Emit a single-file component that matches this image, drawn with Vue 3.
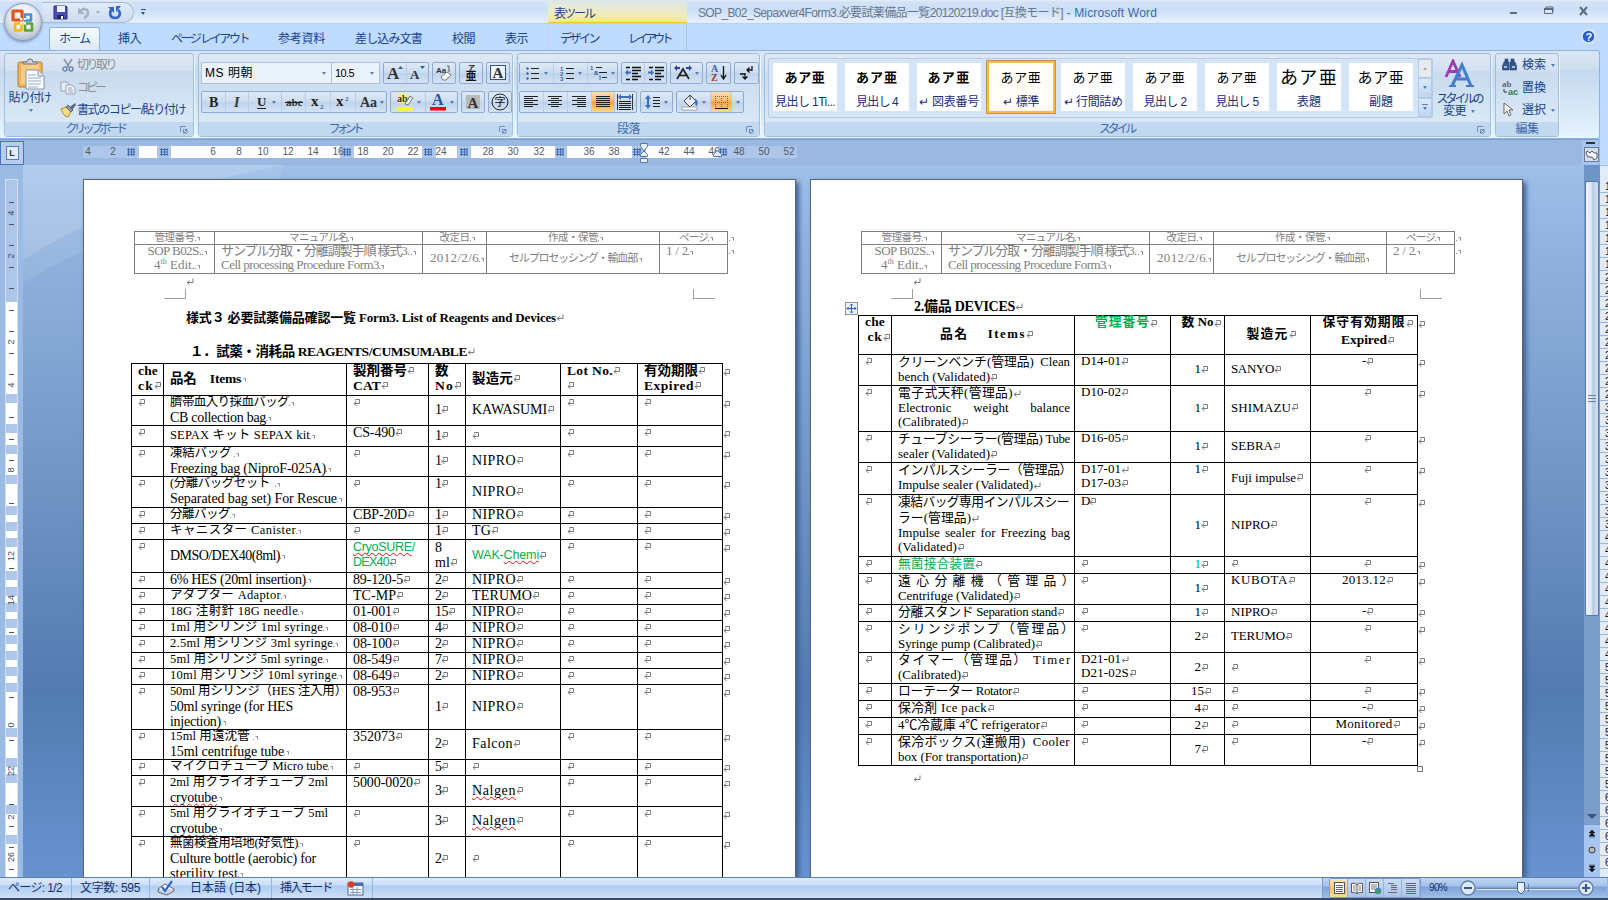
<script setup>
import { h } from 'vue'

// Spreads a label's letters (or only its words) so that it fills a given width.
const vFit = {
  mounted(el, { value }) {
    if (!value) return
    const byWord = Array.isArray(value)
    const target = byWord ? value[0] : value
    const diff = target - el.getBoundingClientRect().width
    const text = el.textContent
    if (byWord) el.style.wordSpacing = diff / (text.split(' ').length - 1) + 'px'
    else el.style.letterSpacing = diff / [...text].length + 'px'
  },
}

const S = (c, t) => `<text fill="${c}" ${t}`
const serif = 'font-family="Liberation Serif" font-weight="bold"'
const lines = (ys, w, x = 0) => ys.map((y, i) => `<rect x="${x + (w[i] ? w[i][0] : 0)}" y="${y}" width="${w[i] ? w[i][1] : 14}" height="1" fill="#222"/>`).join('')

const icons = {
  save: [15, 15, '<path d="M1 1h12l1 1v12H1z" fill="#4a4fb5" stroke="#2c318c"/><rect x="4" y="1" width="8" height="6" fill="#eef3fb"/><rect x="4" y="10" width="7" height="4" fill="#222a55"/><rect x="8" y="11" width="2" height="3" fill="#fff"/>'],
  undo: [15, 14, '<path d="M2 1v7h7z" fill="#a9b4c8"/><path d="M4 6C7 1.500 12 2 12 7c0 3-2 4-4 5" fill="none" stroke="#a9b4c8" stroke-width="2.600"/>'],
  redo: [14, 14, '<path d="M4 3C1 6 1.500 12 7 12s6-6 3-8" fill="none" stroke="#2f66c8" stroke-width="2.600"/><path d="M0 1h6v6zM8 6V0h5z" fill="#2f66c8"/>'],
  paste: [28, 32, '<rect x="1" y="4" width="24" height="25" rx="1.500" fill="#f0b552" stroke="#b97a24"/><rect x="4" y="6" width="18" height="20" fill="#f6cd83"/><path d="M6 6V4h4q0-3 3-3t3 3h4v2z" fill="#cfd3d8" stroke="#70757c"/><path d="M9 12h12l6 6v13H9z" fill="#fff" stroke="#7f93b4"/><path d="M21 12v6h6" fill="#dfe8f5" stroke="#7f93b4"/><path d="M11 17h8M11 20h13M11 23h13M11 26h13M11 29h10" stroke="#8aa7d0"/>'],
  cut: [12, 14, '<path d="M2 1l5 8M10 1L5 9" stroke="#8e99aa" stroke-width="1.700"/><circle cx="3" cy="11" r="2" fill="none" stroke="#6d86ad" stroke-width="1.400"/><circle cx="9" cy="11" r="2" fill="none" stroke="#6d86ad" stroke-width="1.400"/>'],
  copy: [16, 14, '<path d="M1 1h6l2 2v7H1z" fill="#e9eef6" stroke="#94a2b8"/><path d="M6 4h6l3 3v6H6z" fill="#f3f6fb" stroke="#94a2b8"/><path d="M8 7h4M8 9h5M8 11h5" stroke="#94a2b8"/>'],
  brush: [17, 15, '<path d="M1 6l5-2 5 5-3 5q-4 0-7-8z" fill="#f5dc86" stroke="#b58b26"/><path d="M6 4l2-2 5 5-2 2z" fill="#8f9dbb" stroke="#56627e"/><path d="M10 4l5-4 1 2-4 5z" fill="#5c6380"/>'],
  launch: [8, 8, '<path d="M.5 6V.5H6" fill="none" stroke="#6b8fc0"/><path d="M3 3h4.500v4.500H3z" fill="#6b8fc0"/><path d="M4 4l2.500 2.500" stroke="#fff"/>'],
  grow: [20, 18, S('#333', `x="2" y="15" font-size="17" ${serif}>A</text>`) + '<path d="M13 5l2.500-3L18 5z" fill="#2c5dab"/>'],
  shrink: [20, 18, S('#333', `x="2" y="15" font-size="13" ${serif}>A</text>`) + '<path d="M12 2h5l-2.500 3z" fill="#2c5dab"/>'],
  clear: [18, 18, S('#333', `x="1" y="9" font-size="8" font-family="Liberation Sans" font-weight="bold">Aa</text>`) + '<path d="M6 13l6-5 4 3-5 5H8z" fill="#fff" stroke="#777"/><path d="M12 2h2v6" fill="none" stroke="#555"/>'],
  ruby: [18, 20, S('#111', `x="6" y="7" font-size="7" font-family="Noto Sans CJK JP" font-weight="bold">ア</text>`) + S('#111', `x="3.500" y="17" font-size="11" font-family="Noto Sans CJK JP" font-weight="bold">亜</text>`)],
  abox: [18, 18, '<rect x="1.500" y="1.500" width="15" height="14" fill="#eef4fc" stroke="#34517d"/>' + S('#333', `x="3.500" y="14" font-size="15" ${serif}>A</text>`)],
  bold: [14, 16, S('#222', `x="2" y="13" font-size="14" ${serif}>B</text>`)],
  ital: [14, 16, S('#333', `x="4" y="13" font-size="14" font-style="italic" ${serif}>I</text>`)],
  under: [14, 16, S('#222', `x="2" y="12" font-size="13" ${serif}>U</text>`) + '<rect x="2" y="14" width="9" height="1" fill="#222"/>'],
  strike: [20, 16, S('#333', `x="2" y="12" font-size="11" ${serif}>abc</text>`) + '<rect x="1" y="8" width="18" height="1" fill="#222"/>'],
  sub: [16, 16, S('#222', `x="1" y="12" font-size="15" ${serif}>x</text>`) + S('#2c5dab', `x="10" y="15" font-size="7" ${serif}>2</text>`)],
  sup: [16, 16, S('#222', `x="1" y="12" font-size="15" ${serif}>x</text>`) + S('#2c5dab', `x="10" y="7" font-size="7" ${serif}>2</text>`)],
  aa: [18, 16, S('#333', `x="1" y="13" font-size="14" ${serif}>Aa</text>`)],
  hilite: [18, 18, '<rect x="1" y="1" width="10" height="9" fill="#f8f28a"/>' + S('#333', `x="1" y="9" font-size="10" ${serif}>ab</text>`) + '<path d="M9 11l5-8 3 2-5 7z" fill="#f2f2f2" stroke="#777"/><rect x="1" y="14" width="16" height="3.500" fill="#ff0"/>'],
  fcolor: [18, 18, S('#2d5093', `x="3" y="12" font-size="16" ${serif}>A</text>`) + '<rect x="1" y="14" width="16" height="3.500" fill="#f00"/>'],
  ashade: [18, 18, '<rect x="2" y="2" width="14" height="14" fill="#b9b9b9"/>' + S('#333', `x="3.500" y="14.500" font-size="15" ${serif}>A</text>`)],
  circ: [20, 20, '<circle cx="10" cy="10" r="8" fill="none" stroke="#222"/>' + S('#111', `x="4.500" y="14" font-size="11" font-family="Noto Sans CJK JP">字</text>`)],
  bullets: [15, 14, '<path d="M5 2.500h8M5 7.500h8M5 12.500h8" stroke="#222"/><g fill="#3c62a5"><circle cx="1.500" cy="2.500" r="1.200"/><circle cx="1.500" cy="7.500" r="1.200"/><circle cx="1.500" cy="12.500" r="1.200"/></g>'],
  numbers: [15, 15, '<path d="M6 2.500h8M6 7.500h8M6 12.500h8" stroke="#222"/>' + [1, 2, 3].map((n, i) => S('#3c62a5', `x="0" y="${5 + i * 5}" font-size="6" font-family="Liberation Sans" font-weight="bold">${n}</text>`)).join('')],
  multi: [18, 16, '<path d="M6 2.500h6M9 7.500h8M12 12.500h5" stroke="#222"/>' + S('#3c62a5', 'x="0" y="5" font-size="6" font-family="Liberation Sans" font-weight="bold">1</text>') + S('#3c62a5', 'x="4" y="10" font-size="7" font-family="Liberation Sans" font-weight="bold">a</text>') + S('#3c62a5', 'x="9" y="15" font-size="7" font-family="Liberation Sans" font-weight="bold">i</text>')],
  outd: [16, 15, '<path d="M1 1.500h4M7 1.500h9M7 4.500h9M7 7.500h6M7 10.500h9M1 13.500h4M7 13.500h6" stroke="#111" stroke-width="1.500"/><path d="M0 6.500l3-3v2h3v2H3v2z" fill="#3c6cc0"/>'],
  ind: [16, 15, '<path d="M1 1.500h4M7 1.500h9M7 4.500h9M7 7.500h6M7 10.500h9M1 13.500h4M7 13.500h6" stroke="#111" stroke-width="1.500"/><path d="M6 6.500l-3-3v2H0v2h3v2z" fill="#3c6cc0"/>'],
  scaleA: [18, 16, '<path d="M3 14L9 4l6 10M5 10.500h8" stroke="#222" stroke-width="1.700" fill="none"/><path d="M0 3l3-3v2h3v2H3v2zM18 3l-3-3v2h-3v2h3v2z" fill="#2b3fa0"/>'],
  az: [18, 20, S('#3c62a5', 'x="1" y="9" font-size="10" font-family="Liberation Serif" font-weight="bold">A</text>') + S('#a03038', 'x="1" y="18" font-size="10" font-family="Liberation Serif" font-weight="bold">Z</text>') + '<path d="M13.500 3v12M11 12l2.500 4 2.500-4" stroke="#111" fill="none" stroke-width="1.300"/>'],
  mk: [16, 16, '<path d="M13 1v4H8M10.500 2.500L8 5l2.500 2.500M6 8v6M3.500 11.500L6 14l2.500-2.500M1 9h5" stroke="#111" fill="none" stroke-width="1.300"/>'],
  al: [15, 14, lines([1, 3, 5, 7, 9, 11], [[0, 14], [0, 9], [0, 14], [0, 9], [0, 14], [0, 9]])],
  ac: [15, 14, lines([1, 3, 5, 7, 9, 11], [[0, 14], [3, 8], [0, 14], [3, 8], [0, 14], [3, 8]])],
  ar: [15, 14, lines([1, 3, 5, 7, 9, 11], [[0, 14], [5, 9], [0, 14], [5, 9], [0, 14], [5, 9]])],
  aj: [15, 14, lines([1, 3, 5, 7, 9, 11], [])],
  ad: [17, 17, '<path d="M.5 0v16M15.500 0v16" stroke="#333"/><path d="M1 3l3-3v2h8V0l3 3-3 3V4H4v2z" fill="#3c6cc0"/>' + lines([7, 9, 11, 13, 15], [[2, 12], [2, 12], [2, 12], [2, 12], [2, 12]])],
  lsp: [16, 16, '<path d="M3 1L0 5h2v6H0l3 4 3-4H4V5h2z" fill="#3c6cc0"/><path d="M8 3.500h7M8 6.500h7M8 9.500h7M8 12.500h7" stroke="#222"/>'],
  bucket: [18, 18, '<path d="M3 8l6-6 6 6-6 6z" fill="#e9eef5" stroke="#445"/><path d="M9 2v5" stroke="#445"/><path d="M14 6q4 1 2 7-2-1-2-4z" fill="#3c6cc0"/><rect x="1" y="14" width="15" height="3" fill="#fff" stroke="#888" stroke-width=".7"/>'],
  border: [15, 15, '<path d="M1.500 1v12M7.500 1v12M13.500 1v12M1 1.500h13M1 7.500h13" stroke="#7a6a4a" stroke-dasharray="1 1"/><path d="M1 13.500h13" stroke="#111"/>'],
  changeAA: [30, 29, '<path d="M2 18L9 2l7 16M4.500 12.500h9" stroke="#a03aa8" stroke-width="2.800" fill="none"/><path d="M8 27L18 6l9 21M11 20h13" stroke="#3f7fcb" stroke-width="3" fill="none"/><path d="M5 27h7M22 27h8" stroke="#3f7fcb" stroke-width="2"/>'],
  find: [16, 14, '<g fill="#33588f" stroke="#1f3c6b" stroke-width=".6"><rect x="3" y="1" width="3" height="3"/><rect x="9" y="1" width="3" height="3"/><path d="M2 4h5v8H.5V8zM8 4h5l1.500 4v4H8z"/></g><path d="M2 9h3M10 9h3" stroke="#cfe0f5" stroke-width="1.500"/>'],
  repl: [17, 16, S('#667', `x="0" y="7" font-size="9" ${serif}>ab</text>`) + S('#2c7d3a', `x="6" y="15" font-size="9" font-family="Liberation Sans" font-weight="bold">ac</text>`) + '<path d="M2 9v3h3" stroke="#335" fill="none"/>'],
  pick: [12, 16, '<path d="M2 1v11l3-3 2 5 2-1-2-5h4z" fill="#fff" stroke="#666"/>'],
  help: [15, 15, '<circle cx="7.500" cy="7.500" r="6.500" fill="#2a5bd0" stroke="#dfe9fa" stroke-width="1.500"/>' + S('#fff', 'x="4.500" y="11.500" font-size="11" font-family="Liberation Sans" font-weight="bold">?</text>')],
  spell: [18, 16, '<path d="M1 9l7-5 9 5-7 5z" fill="#f5f7fb" stroke="#667"/><path d="M1 10v2l9 3 7-4V9" fill="#c9d3e4" stroke="#667"/><path d="M5 7l3 4 7-10" stroke="#3568c9" stroke-width="2.200" fill="none"/>'],
  macro: [17, 15, '<rect x="1" y="2" width="15" height="12" fill="#f6f8fc" stroke="#55688c"/><path d="M1 3.500h15" stroke="#4a6db0" stroke-width="3"/><path d="M3 8.500h11M3 11.500h11M6 6v7M10 6v7" stroke="#8a9cbd"/><circle cx="4" cy="3.500" r="3.200" fill="#d8401f"/>'],
  logo: [24, 26, '<g fill="none" stroke-width="3.200" stroke-linejoin="round"><rect x="2" y="2" width="9" height="9" stroke="#e2531c"/><rect x="14" y="5.500" width="6" height="6" stroke="#4a90d8" stroke-width="2.600"/><rect x="4" y="14.500" width="6.500" height="7" stroke="#f5b81c" stroke-width="2.600"/><rect x="14" y="14.500" width="7" height="7" stroke="#5fa336" stroke-width="2.600"/></g><g fill="#fff"><rect x="9" y="9" width="2.400" height="2.400"/><rect x="13" y="9" width="2" height="2"/><rect x="9" y="13.500" width="2" height="2"/><rect x="13" y="13.500" width="2" height="2"/></g>'],
  grid: [8, 8, '<path d="M1.500 0v8M4.500 0v8M7 0v8M0 1.500h8M0 4h8M0 6.500h8" stroke="#3b66ac" stroke-width=".9"/>'],
  v1: [14, 14, '<rect x="2.500" y="1.500" width="10" height="11" fill="#fff" stroke="#555"/><path d="M4 4.500h7M4 6.500h7M4 8.500h7M4 10.500h7" stroke="#666"/>'],
  v2: [14, 14, '<path d="M1.500 2.500q3-1 5.500 1 2.500-2 5.500-1v9q-3-1-5.500 1-2.500-2-5.500-1zM7 3.500v9" fill="#fff" stroke="#555"/><path d="M3 5h2.500M3 7h2.500M3 9h2.500M8.500 5H11M8.500 7H11M8.500 9H11" stroke="#777"/>'],
  v3: [14, 14, '<rect x="1.500" y="1.500" width="9" height="10" fill="#fff" stroke="#555"/><path d="M3 4h6M3 6h6M3 8h4" stroke="#777"/><circle cx="10" cy="10" r="3.300" fill="#3d86c4"/><path d="M8 9l2 3 2-2" stroke="#49a34a" stroke-width="1.500" fill="none"/>'],
  v4: [14, 14, '<path d="M2 2.500h6M5 4.500h6M5 6.500h6M5 8.500h6M2 11.500h9" stroke="#667"/>'],
  v5: [14, 14, '<path d="M2 2.500h10M2 4.500h10M2 6.500h10M2 8.500h10M2 10.500h10M2 12.500h10" stroke="#667"/>'],
  move: [13, 13, '<rect x=".5" y=".5" width="12" height="12" fill="#eef2f8" stroke="#8d949e"/><path d="M6.500 2v9M2 6.500h9M5 3.500L6.500 2 8 3.500M5 9.500L6.500 11 8 9.500M3.500 5L2 6.500 3.500 8M9.500 5L11 6.500 9.500 8" stroke="#2f5fb8" fill="none"/>'],
}
const Ic = ({ n }) => {
  const [w, ht, body] = icons[n]
  return h('svg', { class: 'ic', width: w, height: ht, viewBox: `0 0 ${w} ${ht}`, innerHTML: body })
}
Ic.props = ['n']

// Paragraph, cell and line-end marks
const marks = {
  cell: '<path d="M2.500 1.500V.5H6.500V4.500H1M3.500 2.500L1 4.500l2.500 2.500" fill="none" stroke="#7a7a7a"/>',
  para: '<path d="M7 .5V4.500H1.500M3.500 2.500L1.200 4.500l2.300 2" fill="none" stroke="#7a7a7a"/>',
  soft: '<path d="M0 6.500h1M2.500 3.500h2v3" fill="none" stroke="#8a8a8a"/>',
}
const Mk = ({ k }) => h('svg', { class: 'mk', width: 8, height: 8, viewBox: '0 0 8 8', innerHTML: marks[k] })
Mk.props = ['k']

const line = (s) => {
  const [text, w, f = ''] = s.split('~')
  const q = f.match(/q(\d)-(\d)/)
  const chars = [...text]
  return {
    text,
    pre: q ? chars.slice(0, +q[1]).join('') : text,
    mid: q ? chars.slice(+q[1], +q[2]).join('') : '',
    post: q ? chars.slice(+q[2]).join('') : '',
    fit: w ? (f.includes('w') ? [+w] : +w) : 0,
    mark: f.includes('s') ? 'soft' : f.includes('p') ? 'para' : f.includes('n') ? '' : 'cell',
    cls: { green: f.includes('g'), goth: f.includes('h'), jp: /[\u3000-\u9fff]/.test(text), tight: f.includes('t') },
  }
}
const t = (...l) => ({ v: 'top', lines: l.map(line) })
const m = (...l) => ({ v: 'middle', lines: l.map(line) })
const c = (...l) => ({ v: 'middle center', lines: l.map(line) })
const tc = (...l) => ({ v: 'top center', lines: l.map(line) })
const e = () => t('')

const reagents = [
  [32, t('che~20~n', 'ck~16'), m('品名　Items~71~s'), t('製剤番号~54', 'CAT~28'), t('数~13~n', 'No~19'), m('製造元~41'), t('Lot No.~46', ''), t('有効期限~54', 'Expired~50')],
  [30, e(), m('臍帯血入り採血バッグ~119~s', 'CB collection bag~96~s'), e(), m('1~6'), m('KAWASUMI~75'), e(), e()],
  [21, e(), m('SEPAX キット SEPAX kit~140~s'), t('CS-490~42'), m('1~6'), m(''), e(), e()],
  [30, e(), m('凍結バッグ ~64~s', 'Freezing bag (NiproF-025A)~156~s'), e(), m('1~6'), m('NIPRO~44'), e(), e()],
  [31, e(), m('(分離バッグセット  ~105~s', 'Separated bag set) For Rescue~167~s'), e(), t('1~6'), m('NIPRO~44'), e(), e()],
  [16, e(), m('分離バッグ~60~s'), t('CBP-20D~54'), m('1~6'), m('NIPRO~44'), e(), e()],
  [16, e(), m('キャニスター Canister~126~s'), e(), m('1~6'), t('TG~19'), e(), e()],
  [33, e(), m('DMSO/DEX40(8ml)~110~s'), m('CryoSURE/~62~nghq0-8', 'DEX40~36~gh'), m('8~6~n', 'ml~15'), m('WAK-Chemi~67~ghq4-9'), e(), e()],
  [16, e(), m('6% HES (20ml insertion)~136~s'), t('89-120-5~50'), m('2~6'), m('NIPRO~44'), e(), e()],
  [16, e(), m('アダプター Adaptor~111~s'), t('TC-MP~43'), m('2~6'), m('TERUMO~60'), e(), e()],
  [16, e(), m('18G 注射針 18G needle~128~s'), t('01-001~39'), m('15~13'), m('NIPRO~44'), e(), e()],
  [16, e(), m('1ml 用シリンジ 1ml syringe~153~s'), t('08-010~39'), m('4~6'), m('NIPRO~44'), e(), e()],
  [16, e(), m('2.5ml 用シリンジ 3ml syringe~163~s'), t('08-100~39'), m('2~6'), m('NIPRO~44'), e(), e()],
  [16, e(), m('5ml 用シリンジ 5ml syringe~153~s'), t('08-549~39'), m('7~6'), m('NIPRO~44'), e(), e()],
  [16, e(), m('10ml 用シリンジ 10ml syringe~167~s'), t('08-649~39'), m('2~6'), m('NIPRO~44'), e(), e()],
  [45, e(), m('50ml 用シリンジ（HES 注入用）~177~n', '50ml syringe (for HES~123~n', 'injection)~51~s'), t('08-953~39'), m('1~6'), m('NIPRO~44'), e(), e()],
  [30, e(), m('15ml 用遠沈管 ~83~s', '15ml centrifuge tube~114~s'), t('352073~42'), m('2~6'), m('Falcon~41'), e(), e()],
  [16, e(), m('マイクロチューブ Micro tube~158~s'), e(), m('5~6'), m(''), e(), e()],
  [31, e(), m('2ml 用クライオチューブ 2ml~158~n', 'cryotube~47~sq0-8'), t('5000-0020~60'), m('3~6'), m('Nalgen~44~q0-6'), e(), e()],
  [30, e(), m('5ml 用クライオチューブ 5ml~158~n', 'cryotube~47~sq0-8'), e(), m('3~6'), m('Nalgen~44~q0-6'), e(), e()],
  [45, e(), m('無菌検査用培地(好気性)~128~s', 'Culture bottle (aerobic) for~146~n', 'sterility test~68~s'), e(), m('2~6'), m(''), e(), e()],
]
const ec = () => tc('')
const devices = [
  [39, tc('che~20~nt', 'ck~15~t'), c('品名　 Items~86'), tc('管理番号~55~g'), tc('数 No~32'), c('製造元~42'), tc('保守有効期限~83', 'Expired~46')],
  [31, e(), t('クリーンベンチ(管理品)  Clean~172~n', 'bench (Validated)~92'), t('D14-01~40'), c('1~6'), m('SANYO~43'), tc('-~4')],
  [46, e(), t('電子式天秤(管理品)~115~p', 'Electronic weight balance~172~nw', '(Calibrated)~63'), t('D10-02~40'), c('1~6'), m('SHIMAZU~60'), ec()],
  [31, e(), t('チューブシーラー(管理品) Tube~172~n', 'sealer (Validated)~92'), t('D16-05~40'), c('1~6'), m('SEBRA~42'), ec()],
  [32, e(), t('インパルスシーラー（管理品）~174~n', 'Impulse sealer (Validated)~135~p'), t('D17-01~40~p', 'D17-03~40'), tc('1~6'), m('Fuji impulse~65'), ec()],
  [62, e(), t('凍結バッグ専用インパルスシー~171~n', 'ラー(管理品)~73~p', 'Impulse sealer for Freezing bag~172~nw', '(Validated)~59'), t('D~8'), c('1~6'), m('NIPRO~39'), ec()],
  [17, e(), m('無菌接合装置~77~g'), e(), c('1~6~g'), t(''), ec()],
  [31, e(), t('遠心分離機（管理品）~182~n', 'Centrifuge (Validated)~115'), e(), c('1~6'), t('KUBOTA~57'), tc('2013.12~44')],
  [17, e(), m('分離スタンド Separation stand~159'), e(), c('1~6'), m('NIPRO~39'), tc('-~4')],
  [31, e(), t('シリンジポンプ（管理品）~178~n', 'Syringe pump (Calibrated)~137'), e(), c('2~6'), m('TERUMO~54'), ec()],
  [31, e(), t('タイマー（管理品） Timer~174~n', '(Calibrated)~63'), t('D21-01~40~p', 'D21-02S~48'), c('2~6'), m(''), ec()],
  [17, e(), m('ローテーター Rotator~114'), e(), c('15~13'), t(''), ec()],
  [17, e(), m('保冷剤 Ice pack~89'), e(), c('4~6'), t(''), tc('-~4')],
  [17, e(), m('4℃冷蔵庫 4℃ refrigerator~142'), e(), c('2~6'), t(''), tc('Monitored~57')],
  [31, e(), t('保冷ボックス(運搬用)  Cooler~172~n', 'box (For transportation)~123'), e(), c('7~6'), t(''), tc('-~4')],
]

const headRows = (page) => [
  [13, c('管理番号~40~s'), c('マニュアル名~59~s'), c('改定日~30~s'), c('作成・保管~50~s'), c('ページ~29~s')],
  [29, tc('SOP B02S.~54~s', '4th Edit.~41~s'), t('サンプル分取・分離調製手順 様式3. ~190~s', 'Cell processing Procedure Form3~158~s'), c('2012/2/6~49~s'), c('セルプロセッシング・輸血部~128~s'), t(page + ' / 2~22~s')],
]

const pages = [
  { id: 1, rows: reagents, head: headRows(1) },
  { id: 2, rows: devices, head: headRows(2) },
]

const tabs = [['挿入', 119, 23], ['ページ レイアウト', 172, 77], ['参考資料', 279, 47], ['差し込み文書', 356, 67], ['校閲', 453, 23], ['表示', 506, 23], ['デザイン', 561, 38], ['レイアウト', 629, 42]]
  .map(([s, x, w], i, a) => ({ s, w, gap: x - (i ? a[i - 1][1] + a[i - 1][2] : 101) }))

const fontRow1 = [
  [{ n: 'grow', w: 22 }, { n: 'shrink', w: 22 }], [{ n: 'clear', w: 22 }], [{ n: 'ruby', w: 22 }], [{ n: 'abox', w: 22 }],
]
const fontRow2 = [
  [{ n: 'bold', w: 23 }, { n: 'ital', w: 23 }, { n: 'under', w: 33, d: 1 }, { n: 'strike', w: 24 }, { n: 'sub', w: 25 }, { n: 'sup', w: 25 }, { n: 'aa', w: 31, d: 1 }],
  [{ n: 'hilite', w: 34, d: 1 }, { n: 'fcolor', w: 32, d: 1 }], [{ n: 'ashade', w: 22 }], [{ n: 'circ', w: 22 }],
]
const paraRow1 = [
  [{ n: 'bullets', w: 33, d: 1 }, { n: 'numbers', w: 34, d: 1 }, { n: 'multi', w: 30, d: 1 }],
  [{ n: 'outd', w: 22 }, { n: 'ind', w: 22 }], [{ n: 'scaleA', w: 31, d: 1 }], [{ n: 'az', w: 23 }], [{ n: 'mk', w: 23 }],
]
const paraRow2 = [
  [{ n: 'al', w: 23 }, { n: 'ac', w: 24 }, { n: 'ar', w: 24 }, { n: 'aj', w: 23, on: 1 }, { n: 'ad', w: 22 }],
  [{ n: 'lsp', w: 31, d: 1 }], [{ n: 'bucket', w: 33, d: 1 }, { n: 'border', w: 21, on: 1 }, { n: '', w: 12, d: 1 }],
]
const styles = [
  ['見出し 1Ti...', 60, 41, 'b'], ['見出し 4', 42, 42, 'b'], ['↵ 図表番号', 60, 43, 'b'], ['↵ 標準', 37, 41, 'sel'], ['↵ 行間詰め', 59, 41, ''],
  ['見出し 2', 43, 41, ''], ['見出し 5', 43, 41, ''], ['表題', 24, 58, 'big'], ['副題', 24, 47, 'mid'],
]

const rulerNums = [[4, 88], [2, 113], [6, 213], [8, 239], [10, 263], [12, 288], [14, 313], [16, 338], [18, 363], [20, 388], [22, 413], [24, 441], [28, 488], [30, 513], [32, 539], [36, 589], [38, 614], [42, 664], [44, 689], [46, 714], [48, 739], [50, 764], [52, 789]]
const rulerBands = [[83, 139], [157, 171], [340, 354], [422, 436], [457, 471], [555, 567], [632, 646], [718, 797]]
const rulerGrids = [131, 164, 347, 428, 464, 560, 637, 723]

const rowLines = reagents.slice(0, -1).reduce((a, r) => [...a, a[a.length - 1] + r[0]], [363]).slice(1)
const vNums = [['4', 213], ['2', 256], ['2', 342], ['4', 385], ['8', 470], ['12', 556], ['14', 600], ['0', 725], ['22', 771], ['2', 817], ['26', 857]]
const vTicks = [202, 224, 245, 267, 288, 310, 331, 353, 374, 417, 439, 460, 503, 568, 632, 697, 740, 804, 826, 847, 869]
const sheetRows = Array.from({ length: 53 }, (_, i) => String(i + 13)[0])
</script>

<template>
  <div class="app">
    <header class="title">
      <div class="qat">
        <Ic n="save" /><Ic n="undo" class="u" /><i class="car dim" /><Ic n="redo" class="r" />
      </div>
      <div class="qc"><i /><i class="car" /></div>
      <div class="ctx"><span v-fit="40" class="x">表ツール</span></div>
      <div class="doc"><span v-fit="365" class="x">SOP_B02_Sepaxver4Form3.必要試薬備品一覧20120219.doc [互換モード]</span><span v-fit="94" class="x app-name"> - Microsoft Word</span></div>
      <div class="win">
        <svg width="90" height="20" viewBox="0 0 90 20"><path d="M6 13h7" stroke="#5c6b80" stroke-width="2" /><path d="M42 7h7v5h-7z" fill="none" stroke="#5c6b80" /><path d="M40.500 8.500h8v5h-8z" fill="#dbe8f8" stroke="#5c6b80" /><path d="M40 9h9" stroke="#5c6b80" stroke-width="2" /><path d="M76 7l7 8M83 7l-7 8" stroke="#5c6b80" stroke-width="2" /></svg>
      </div>
    </header>
    <div class="orb"><Ic n="logo" /></div>
    <nav class="tabs">
      <div class="tab on"><span v-fit="30" class="x">ホーム</span></div>
      <div v-for="b in tabs" :key="b.s" class="tab" :style="{ marginLeft: b.gap + 'px', width: b.w + 'px' }"><span v-fit="b.w" class="x">{{ b.s }}</span></div>
      <Ic n="help" class="help" />
    </nav>

    <section class="ribbon">
      <div class="grp g1">
        <div class="body">
          <div class="paste"><Ic n="paste" /><span v-fit="42" class="x">貼り付け</span><i class="car" /></div>
          <div class="clip">
            <div class="off"><Ic n="cut" /><span v-fit="38" class="x">切り取り</span></div>
            <div class="off"><Ic n="copy" /><span v-fit="27" class="x">コピー</span></div>
            <div><Ic n="brush" /><span v-fit="108" class="x">書式のコピー/貼り付け</span></div>
          </div>
        </div>
        <div class="lab"><span v-fit="59" class="x">クリップボード</span><Ic n="launch" class="la" /></div>
      </div>
      <div class="grp g2">
        <div class="body rows">
          <div class="brow">
            <div class="combo c1"><span v-fit="48" class="x">MS 明朝</span><i class="car" /></div>
            <div class="combo c2"><span v-fit="19" class="x num11">10.5</span><i class="car" /></div>
            <div v-for="(g, i) in fontRow1" :key="i" class="bg"><div v-for="b in g" :key="b.n" class="bt" :style="{ width: b.w + 'px' }"><Ic :n="b.n" /></div></div>
          </div>
          <div class="brow">
            <div v-for="(g, i) in fontRow2" :key="i" class="bg"><div v-for="b in g" :key="b.n" class="bt" :style="{ width: b.w + 'px' }"><Ic :n="b.n" /><i v-if="b.d" class="car" /></div></div>
          </div>
        </div>
        <div class="lab"><span v-fit="32" class="x">フォント</span><Ic n="launch" class="la" /></div>
      </div>
      <div class="grp g3">
        <div class="body rows">
          <div v-for="(r, k) in [paraRow1, paraRow2]" :key="k" class="brow">
            <div v-for="(g, i) in r" :key="i" class="bg"><div v-for="b in g" :key="b.n" class="bt" :class="{ on: b.on }" :style="{ width: b.w + 'px' }"><Ic v-if="b.n" :n="b.n" /><i v-if="b.d" class="car" /></div></div>
          </div>
        </div>
        <div class="lab"><span v-fit="23" class="x">段落</span><Ic n="launch" class="la" /></div>
      </div>
      <div class="grp g4">
        <div class="body">
          <div class="gallery">
            <div v-for="s in styles" :key="s[0]" class="tile" :class="s[3]"><b class="sample"><span v-fit="s[2]" class="x">あア亜</span></b><span v-fit="s[1]" class="x nm">{{ s[0] }}</span></div>
            <div class="gs"><div><i class="car up dim" /></div><div><i class="car" /></div><div><i class="bar" /><i class="car" /></div></div>
          </div>
          <div class="chg"><Ic n="changeAA" /><span v-fit="45" class="x">スタイルの</span><div><span v-fit="23" class="x">変更</span><i class="car" /></div></div>
        </div>
        <div class="lab l4"><span v-fit="35" class="x">スタイル</span><Ic n="launch" class="la" /></div>
      </div>
      <div class="grp g5">
        <div class="body edit">
          <div><Ic n="find" /><span v-fit="24" class="x">検索</span><i class="car" /></div>
          <div><Ic n="repl" /><span v-fit="24" class="x">置換</span></div>
          <div><Ic n="pick" /><span v-fit="24" class="x">選択</span><i class="car" /></div>
        </div>
        <div class="lab"><span v-fit="23" class="x">編集</span></div>
      </div>
    </section>

    <div class="ruler">
      <div class="tabsel"><b>L</b></div>
      <div class="rbar"></div>
      <i v-for="b in rulerBands" :key="'b' + b[0]" class="band" :style="{ left: b[0] + 'px', width: b[1] - b[0] + 'px' }" />
      <span v-for="n in rulerNums" :key="'n' + n[0] + n[1]" class="num" :style="{ left: n[1] - 10 + 'px' }">{{ n[0] }}</span>
      <Ic v-for="g in rulerGrids" :key="'g' + g" n="grid" class="rg" :style="{ left: g - 4 + 'px' }" />
      <svg class="indent" width="86" height="22" viewBox="0 0 86 22"><g fill="#e8eef7" stroke="#5a79a8"><path d="M1.500 1.500h7v3L5 9 1.500 4.500zM1.500 14.500v-2L5 9l3.500 3.500v2zM1.500 16.500h7v4h-7z" /><path d="M74.500 14.500v-2l4-4 4 4v2z" /></g></svg>
      <div class="split"><i /><svg width="15" height="15" viewBox="0 0 15 15"><rect x=".5" y=".5" width="14" height="14" fill="#d4deec" stroke="#6b7c94" /><path d="M3 4l3 2 2-2 2 2h3v5l-3 2-2-3H4L2 6z" fill="#fff" stroke="#556" /></svg></div>
    </div>

    <main class="work">
      <svg class="swirl" width="260" height="130" viewBox="0 0 260 130"><path d="M0 95Q100 30 260 0H0z" fill="#fff" opacity=".14" /><path d="M0 118Q110 50 250 40L260 0H0z" fill="#fff" opacity=".08" /></svg>
      <div class="vr">
        <div class="vbar"></div>
        <i v-for="y in rowLines" :key="y" class="vb" :style="{ top: y - 165 + 'px' }" />
        <i v-for="y in vTicks" :key="'t' + y" class="vt" :style="{ top: y - 165 + 'px' }" />
        <span v-for="n in vNums" :key="n[1]" class="vn" :style="{ top: n[1] - 172 + 'px' }">{{ n[0] }}</span>
      </div>
      <article v-for="p in pages" :key="p.id" class="page" :class="'p' + p.id">
        <div class="tbl head">
          <div v-for="(r, i) in p.head" :key="i" class="row" :style="{ height: r[0] + 'px' }">
            <div v-for="(cell, j) in r.slice(1)" :key="j" class="cell" :class="cell.v"><div v-for="(l, k) in cell.lines" :key="k" class="ln"><span v-fit="l.fit" class="x"><template v-if="l.pre.startsWith('4th')">4<sup>th</sup> Edit.</template><template v-else>{{ l.pre }}</template></span><Mk :k="l.mark" /></div></div>
            <Mk k="soft" class="out" />
          </div>
        </div>
        <div class="crop"><Mk k="para" class="pm" /><i class="cl" /><i class="cr" /></div>
        <template v-if="p.id === 1">
          <h1><span v-fit="370" class="x">様式３ 必要試薬備品確認一覧 Form3. List of Reagents and Devices</span><Mk k="para" /></h1>
          <h2><span v-fit="277" class="x">１．試薬・消耗品 REAGENTS/CUMSUMABLE</span><Mk k="para" /></h2>
        </template>
        <h3 v-else><Ic n="move" class="mv" /><span v-fit="101" class="x">2.備品 DEVICES</span><Mk k="para" /></h3>
        <div class="tbl main">
          <div v-for="(r, i) in p.rows" :key="i" class="row" :class="{ hd: i === 0 }" :style="{ height: r[0] + 'px' }">
            <div v-for="(cell, j) in r.slice(1)" :key="j" class="cell" :class="cell.v"><div v-for="(l, k) in cell.lines" :key="k" class="ln" :class="l.cls"><span v-if="l.text" v-fit="l.fit" class="x">{{ l.pre }}<u v-if="l.mid">{{ l.mid }}</u>{{ l.post }}</span><Mk v-if="l.mark" :k="l.mark" /></div></div>
            <Mk k="cell" class="out" />
          </div>
          <i v-if="p.id === 2" class="endsq" />
        </div>
        <Mk v-if="p.id === 2" k="para" class="last" />
      </article>
      <div class="sb">
        <i class="car sup" /><div class="thumb"><i /><i /><i /></div><i class="car sdn" />
        <svg class="nav" width="16" height="52" viewBox="0 0 16 52"><rect width="16" height="52" fill="#a6c5f1" /><path d="M8 5l3 3H5zM8 8l3 3H5zM5 12h6M8 47l3-3H5zM8 44l3-3H5zM5 40h6" fill="#111" stroke="#111" stroke-width=".5" /><circle cx="8" cy="25" r="3" fill="#bbb" stroke="#333" /></svg>
      </div>
      <div class="sheet"><div v-for="(s, i) in sheetRows" :key="i">{{ s }}</div></div>
    </main>

    <footer class="status">
      <div class="s1"><span v-fit="54" class="x">ページ: 1/2</span></div>
      <div class="s2"><span v-fit="60" class="x">文字数: 595</span></div>
      <div class="s3"><Ic n="spell" /><span v-fit="71" class="x">日本語 (日本)</span></div>
      <div class="s4"><span v-fit="52" class="x">挿入モード</span><Ic n="macro" /></div>
      <div class="s5">
        <div class="views"><div v-for="n in 5" :key="n" :class="{ on: n === 1 }"><Ic :n="'v' + n" /></div></div>
        <span v-fit="18" class="x pc">90%</span>
        <svg width="136" height="20" viewBox="0 0 136 20"><g fill="#dde8f7" stroke="#5f7fae" stroke-width="1.300"><circle cx="9" cy="10" r="7" /><circle cx="127" cy="10" r="7" /></g><path d="M5 10h8M123 10h8M127 6v8" stroke="#3b5688" stroke-width="2" /><path d="M18 10.500h100" stroke="#6886b5" /><path d="M18 11.500h100" stroke="#dfeafa" /><path d="M69.500 6v8" stroke="#6886b5" /><path d="M58.500 4.500h7v8L62 16l-3.500-3.500z" fill="#e9f1fb" stroke="#3f5f95" /></svg>
      </div>
    </footer>
  </div>
</template>

<style>
html, body { margin: 0; overflow: hidden; }
</style>

<style scoped>
.app { position: relative; width: 1608px; height: 900px; overflow: hidden; background: #bfdbff; font: 12px/14px "Liberation Sans", "Noto Sans CJK JP", sans-serif; color: #15428b; display: flex; flex-direction: column; }
.x { display: inline-block; white-space: pre; flex: none; }
.ic, .mk { flex: none; display: block; }
.car { width: 0; height: 0; border: 2.5px solid transparent; border-top: 3px solid #5b7fb4; border-bottom: 0; flex: none; }
.car.dim { border-top-color: #a5b0c0; }
.car.up { transform: rotate(180deg); }

.title { height: 24px; flex: none; display: flex; background: linear-gradient(#e3ecf9 0, #d2e2f7 10%, #cbdff7 45%, #e4effd 90%); border-bottom: 1px solid #b8d2f4; box-sizing: border-box; }
.qat { box-sizing: border-box; width: 92px; height: 21px; margin: 2px 0 0 42px; border: 1px solid #a3bad9; border-left: 0; border-radius: 0 11px 11px 0; display: flex; align-items: center; padding-left: 11px; background: linear-gradient(#e2ebf8, #cddcf0); }
.qat .u { margin-left: 8px; } .qat .car { margin-left: 5px; } .qat .r { margin-left: 8px; }
.qc { width: 5px; margin: 9px 0 0 7px; }
.qc i { display: block; } .qc i:first-child { height: 1px; background: #33507f; margin-bottom: 2px; } .qc .car { border-top-color: #33507f; }
.ctx { box-sizing: border-box; width: 139px; margin-left: 402px; padding: 7px 0 0 6px; background: linear-gradient(#dce6ea, #efecc0 60%, #fbe88b); border-bottom: 1px solid #f3c92c; }
.doc { margin: 6px 0 0 11px; width: 480px; color: #68778c; white-space: nowrap; }
.app-name { color: #3a68a8; }
.win { margin-left: 326px; }
.orb { position: absolute; left: 4px; top: 3px; width: 36px; height: 36px; border-radius: 50%; border: 1px solid #8b9bb5; background: radial-gradient(circle at 50% 35%, #fff 0, #e9edf3 40%, #b9c4d4 75%, #f3f6fa 100%); display: flex; align-items: center; justify-content: center; z-index: 3; box-shadow: 0 1px 3px #6d86ad; }
.tabs { height: 26px; flex: none; display: flex; background: linear-gradient(90deg, transparent 547px, #c4d3de 547px, #c4d3de 548px, transparent 548px, transparent 686px, #b0c4de 686px, #b0c4de 687px, transparent 687px) #bfdbff; }
.tab { padding-top: 8px; flex: none; }
.tab.on { width: 51px; margin-left: 49px; box-sizing: border-box; border: 1px solid #8db2e3; border-bottom: 0; border-radius: 3px 3px 0 0; height: 23px; margin-top: 3px; padding: 4px 0 0 9px; background: linear-gradient(#f6fafe, #dde9f7); }
.help { margin: 5px 0 0 911px; }

.ribbon { height: 89px; flex: none; box-sizing: border-box; display: flex; gap: 4px; padding: 2px 0 2px 4px; width: 1600px; border: 1px solid #8db2e3; border-left: 0; border-radius: 0 3px 3px 0; background: linear-gradient(#dbe6f4, #cfdff0 20%, #c5d8ed 22%, #dcecfa 80%, #e7f6ff); }
.grp { box-sizing: border-box; border: 1px solid #9fbfdf; border-radius: 3px; display: flex; flex-direction: column; height: 84px; flex: none; background: linear-gradient(#dfe9f5, #d3e1f1 20%, #c8daee 22%, #d9e8f6 80%); box-shadow: 1px 1px 0 #eef7ff; }
.g1 { width: 190px; } .g2 { width: 315px; } .g3 { width: 243px; } .g4 { width: 727px; } .g5 { width: 64px; }
.body { flex: 1; display: flex; min-height: 0; }
.lab { height: 14px; flex: none; background: #c1d8f0; color: #3e6aaa; display: flex; justify-content: center; align-items: center; position: relative; }
.g1 .lab, .g2 .lab { padding-right: 8px; } .g2 .lab { padding-right: 22px; } .g3 .lab { padding-right: 20px; } .l4 { padding-right: 22px; }
.la { position: absolute; right: 5px; top: 4px; }
.paste { width: 51px; display: flex; flex-direction: column; align-items: center; padding-top: 4px; }
.paste .x { margin: 1px 2px 0 0; } .paste .car { margin-top: 4px; }
.clip { display: flex; flex-direction: column; padding: 0 0 0 2px; }
.clip > div { height: 22.500px; display: grid; grid-template-columns: 20px auto; align-items: center; justify-content: start; }
.clip .x, .edit .x { justify-self: start; }
.clip .ic { justify-self: center; }
.clip .x { margin-left: -1px; }
.off { color: #8d8d8d; }
.rows { flex-direction: column; padding: 8px 0 0 2px; gap: 7px; }
.g3 .rows { padding-left: 1px; }
.brow { display: flex; gap: 3px; height: 22px; }
.combo { box-sizing: border-box; height: 22px; border: 1px solid #abc1de; background: #eaf2fb; color: #000; display: flex; align-items: center; justify-content: space-between; padding: 0 5px 0 3px; }
.num11 { font-size: 11px; }
.c1 { width: 131px; } .c2 { width: 49px; margin-left: -4px; }
.bg { box-sizing: border-box; height: 22px; border: 1px solid #8fabd0; border-radius: 2px; display: flex; background: linear-gradient(#dfeaf7, #cbdcf0 48%, #bfd3eb 52%, #d3e3f5); }
.bt { display: flex; align-items: center; justify-content: center; gap: 3px; box-sizing: border-box; border-left: 1px solid #b9cde6; }
.bt:first-child { border-left: 0; }
.bt.on { background: linear-gradient(#fde0b0, #fdb762 45%, #fb9e3a 50%, #fdd98a); }
.gallery { box-sizing: border-box; width: 665px; height: 60px; margin: 4px 0 0 3px; border: 1px solid #b4cbea; background: #d5e5f7; display: flex; border-radius: 2px; }
.tile { width: 64px; height: 48px; background: #fff; margin: 4px 8px 0 0; flex: none; text-align: center; color: #1a2e78; display: flex; flex-direction: column; align-items: center; }
.tile:first-child { margin-left: 4px; }
.tile.sel { outline: 2px solid #fbb94c; box-shadow: 0 0 0 3px #c9904a; background: #fffdf6; }
.sample { height: 28px; padding-top: 7px; box-sizing: border-box; color: #000; font-weight: 400; font-size: 13px; line-height: 16px; }
.b .sample { font-weight: 700; } .big .sample { font-size: 18px; } .mid .sample { font-size: 15px; }
.nm { margin-top: 4px; }
.gs { width: 14px; margin-left: -3px; display: flex; flex-direction: column; }
.gs div { flex: 1; border: 1px solid #b4cbea; background: linear-gradient(#dceafa, #bed6f3); display: flex; flex-direction: column; align-items: center; justify-content: center; gap: 2px; }
.gs div:first-child { background: #e8eaee; }
.bar { width: 6px; height: 1px; background: #5b7fb4; }
.chg { width: 54px; display: flex; flex-direction: column; align-items: center; padding-top: 5px; line-height: 12px; margin-left: -1px; }
.chg .ic { margin-bottom: 5px; }
.chg div { display: flex; align-items: center; gap: 5px; }
.edit { flex-direction: column; }
.edit div { height: 22.500px; display: grid; grid-template-columns: 20px 29px auto; align-items: center; justify-content: start; padding-left: 6px; }

.ruler { height: 26px; flex: none; position: relative; background: #9ab8e0; border-top: 1px solid #7f9fc8; box-sizing: border-box; width: 1600px; }
.tabsel { position: absolute; left: 0; top: 1px; width: 22px; height: 22px; border: 1px solid #4673bb; background: #b6cdf0; display: flex; align-items: center; justify-content: center; }
.tabsel b { width: 11px; height: 12px; border: 1px solid #5580c0; background: #e4eefb; color: #333; font-size: 9px; line-height: 12px; text-align: center; }
.rbar { position: absolute; left: 83px; top: 6px; width: 714px; height: 12px; background: #fff; }
.band { position: absolute; top: 6px; height: 12px; background: #adc6e9; }
.num { position: absolute; top: 5px; width: 20px; text-align: center; font-size: 10px; color: #555b66; }
.rg { position: absolute; top: 8px; }
.indent { position: absolute; left: 639px; top: 2px; }
.split { position: absolute; right: 1px; top: 0; width: 17px; height: 25px; background: #a6c5f1; }
.split i { display: block; width: 9px; height: 2px; background: #333; margin: 2px 0 3px 4px; }
.split svg { display: block; margin-left: 2px; }

.work { flex: none; height: 712px; position: relative; display: flex; overflow: hidden; background: linear-gradient(#a0c0ea 0, #93b4df 10%, #6a8ec0 52%, #527bb0 74%, #5f88c2 88%, #6893d0 100%); }
.swirl { position: absolute; left: 23px; top: 0; }
.vr { width: 23px; height: 712px; background: #9cbbe4; position: relative; flex: none; }
.vbar { position: absolute; left: 5px; top: 14px; width: 11px; height: 700px; border: 1px solid #cfe0f7; background: linear-gradient(#adc6e9 122px, #fff 122px); }
.vb { position: absolute; left: 6px; width: 11px; height: 9px; background: #adc6e9; margin-top: -1px; }
.vt { position: absolute; left: 9px; width: 5px; height: 1px; background: #556; }
.vn { position: absolute; left: 2px; width: 18px; height: 14px; text-align: center; transform: rotate(-90deg); font-size: 9px; color: #444b58; }
.page { box-sizing: border-box; width: 713px; height: 730px; background: #fff; border: 1px solid #5b6470; border-width: 1px 1px 0 1px; margin-top: 14px; flex: none; box-shadow: 3px 3px 5px #3c5f93; position: relative; font-family: "Liberation Serif", "Noto Sans CJK JP", serif; color: #000; }
.p1 { margin-left: 60px; } .p2 { margin-left: 14px; }
.tbl { width: max-content; }
.row { box-sizing: border-box; display: flex; border-top: 1px solid #000; position: relative; }
.cell { box-sizing: border-box; border-left: 1px solid #000; padding-left: 6px; display: flex; flex-direction: column; flex: none; height: 100%; }
.middle { justify-content: center; }
.center { align-items: center; padding-left: 0; }
.ln { height: 15px; line-height: 15px; display: flex; flex: none; align-items: center; white-space: nowrap; }
.ln .x { margin-top: -2px; }
.mk { margin-right: -8px; margin-top: -1px; }
.out { position: absolute; left: 100%; top: 6px; margin-left: 1px; }

.head { margin: 51px 0 0 50px; border: 1px solid #808080; border-top: 0; border-left: 0; color: #7f7f7f; }
.head .row, .head .cell { border-color: #808080; }
.head .out { top: 3px; margin-left: 2px; }
.head .ln { font-size: 12.5px; height: 14px; line-height: 14px; }
.head .row:first-child .ln { font-size: 10.5px; height: 12px; line-height: 11px; }
.head .row:nth-child(2) .ln { font-size: 13px; }
.head .row:nth-child(2) .cell:nth-child(4) .ln { font-size: 11px; }
.head sup { font-size: 8px; line-height: 0; }
.head .cell:nth-child(1) { width: 80px; } .head .cell:nth-child(2) { width: 208px; } .head .cell:nth-child(3) { width: 64px; }
.head .cell:nth-child(4) { width: 173px; } .head .cell:nth-child(5) { width: 68px; }
.crop { height: 27px; position: relative; }
.pm { position: absolute; left: 102px; top: 4px; margin: 0; }
.cl { position: absolute; left: 80px; top: 15px; width: 21px; height: 9px; border: 1px solid #a0a0a0; border-width: 0 1px 1px 0; }
.cr { position: absolute; left: 609px; top: 15px; width: 21px; height: 9px; border: 1px solid #a0a0a0; border-width: 0 0 1px 1px; }
h1, h2, h3 { margin: 0; display: flex; align-items: center; font-weight: 700; height: 16px; line-height: 16px; flex: none; }
h1 { font-size: 13px; margin: 9px 0 0 102px; }
h2 { font-size: 13.500px; margin: 18px 0 0 106px; }
h3 { font-size: 14px; margin: -2px 0 0 103px; position: relative; }
.mv { position: absolute; left: -69px; top: 3px; }
.main .cell { font-size: 13px; }
.p1 .main { margin: 3px 0 0 47px; border-right: 1px solid #000; }
.p1 .main .ln { font-size: 14px; } .p1 .main .ln.jp { font-size: 12.5px; } .p1 .main .ln.goth { font-size: 12.5px; }
.p1 .main .cell:nth-child(1) { width: 32px; } .p1 .main .cell:nth-child(2) { width: 183px; } .p1 .main .cell:nth-child(3) { width: 82px; }
.p1 .main .cell:nth-child(4) { width: 37px; } .p1 .main .cell:nth-child(5) { width: 95px; } .p1 .main .cell:nth-child(6) { width: 77px; } .p1 .main .cell:nth-child(7) { width: 85px; }
.hd .ln, .p1 .main .hd .ln, .p1 .main .hd .ln.jp { font-weight: 700; font-size: 13.500px; }
.p2 .main { margin: 0 0 0 47px; border: 1px solid #000; border-width: 0 1px 1px 0; position: relative; }
.p2 .main .ln { height: 14px; line-height: 14px; } .p2 .main .ln.jp { height: 16px; line-height: 14px; font-size: 12.8px; }
.p2 .main .hd .ln { height: 17px; line-height: 17px; } .p2 .main .hd .top .ln .x { margin-top: -5px; } .p2 .main .hd .ln.tight { height: 15px; line-height: 15px; }
.p2 .main .cell:nth-child(1) { width: 33px; } .p2 .main .cell:nth-child(2) { width: 183px; } .p2 .main .cell:nth-child(3) { width: 96px; }
.p2 .main .cell:nth-child(4) { width: 54px; } .p2 .main .cell:nth-child(5) { width: 86px; } .p2 .main .cell:nth-child(6) { width: 107px; }
.green .x { color: #00b050; }
.goth { font-family: "Liberation Sans", sans-serif; }
u { text-decoration: underline wavy #e01010 1px; text-underline-offset: 1px; text-decoration-skip-ink: none; }
.endsq { position: absolute; left: 100%; top: 100%; width: 4px; height: 4px; border: 1px solid #777; margin: 1px 0 0 0; }
.last { margin: 9px 0 0 102px; }

.sb { position: absolute; left: 1584px; top: 0; width: 16px; height: 712px; background: linear-gradient(#6d94c8, #7a9dcb 15%, #7c9ecb 92%); }
.sup { position: absolute; left: 3px; top: 5px; border-width: 0 5px 5px; border-color: transparent transparent #39537f; }
.sdn { position: absolute; left: 3px; top: 649px; border-width: 5px 5px 0; border-top-color: #39537f; }
.thumb { position: absolute; left: 1px; top: 16px; width: 12px; height: 433px; border: 1px solid #5c76a8; border-radius: 2px; background: linear-gradient(90deg, #f2f6fb, #dde6f1 45%, #b9cce4 55%, #d5e1f0); display: flex; flex-direction: column; align-items: center; justify-content: center; gap: 2px; }
.thumb i { width: 8px; height: 1px; background: #6a7f9f; }
.nav { position: absolute; left: 0; top: 660px; }
.sheet { position: absolute; left: 1600px; top: 1px; width: 8px; height: 711px; overflow: hidden; background: #e3ebf6; padding-top: 14px; box-sizing: border-box; color: #1a1a1a; font-size: 10px; }
.sheet div { height: 12px; line-height: 13px; border-bottom: 1px solid #9eb6ce; padding-left: 5px; }

.status { height: 23px; flex: none; display: flex; align-items: center; box-sizing: border-box; border-top: 1px solid #5b7fb0; border-bottom: 2px solid #3b4963; background: linear-gradient(#dceafc, #cbdff8 35%, #afcdf1 40%, #cfe1f8); color: #14306c; }
.status > div { height: 20px; display: flex; align-items: center; box-sizing: border-box; border-right: 1px solid #94b4de; flex: none; }
.s1 { width: 72px; padding-left: 8px; } .s2 { width: 78px; padding-left: 8px; } .s3 { width: 122px; padding-left: 7px; gap: 15px; } .s4 { width: 101px; padding-left: 8px; gap: 15px; }
.status .s5 { margin-left: 949px; width: 286px; padding-left: 6px; background: linear-gradient(#bdd4f2, #a5c2ea 40%, #7fa4d8 45%, #9fbfe9); border-left: 1px solid #7a9ccb; }
.views { display: flex; width: 90px; height: 18px; border: 1px solid #7c9cca; border-radius: 2px; flex: none; background: linear-gradient(#cadcf3, #a9c4e8); }
.views div { width: 18px; display: flex; align-items: center; justify-content: center; box-sizing: border-box; border-right: 1px solid #97b3db; }
.views .on { background: linear-gradient(#fde7bd, #fdc063 60%, #fde08e); }
.pc { margin: 0 12px 0 8px; font-size: 10px; }
</style>
